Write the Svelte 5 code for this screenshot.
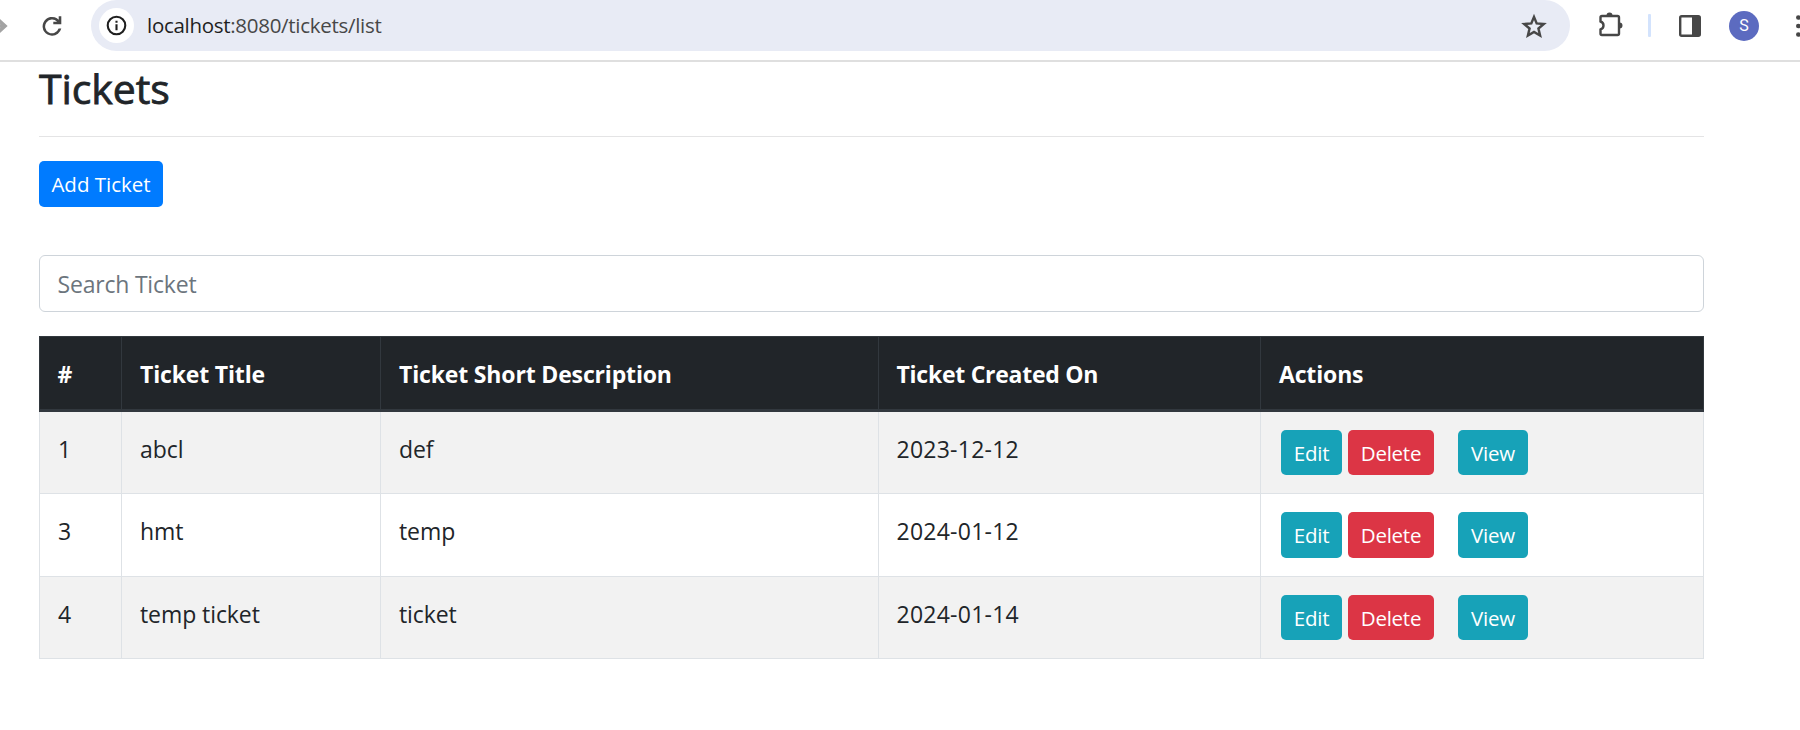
<script>
  const columns = ['#', 'Ticket Title', 'Ticket Short Description', 'Ticket Created On', 'Actions'];
  const tickets = [
    { id: 1, title: 'abcl', description: 'def', created: '2023-12-12' },
    { id: 3, title: 'hmt', description: 'temp', created: '2024-01-12' },
    { id: 4, title: 'temp ticket', description: 'ticket', created: '2024-01-14' }
  ];
</script>

<div class="window">
  <header class="toolbar">
    <svg class="forward" viewBox="0 0 8 24"><path d="M-8 12H5M-2 5.500L5 12L-2 18.500" fill="none" stroke="#a3a3a3" stroke-width="3.600" /></svg>
    <svg class="reload" viewBox="0 0 24 24"><path fill="#474747" d="M12 21.7a9.4 9.4 0 1 1 6.7-16V2.3h2.6v8h-8V7.700h3.800a6.900 6.900 0 1 0 1.500 6.900h2.700A9.400 9.400 0 0 1 12 21.700z" /></svg>
    <div class="address">
      <span class="info">
        <svg viewBox="0 0 22 22"><circle cx="11" cy="11" r="9.200" fill="none" stroke="#1f1f1f" stroke-width="2.200" /><path d="M11 9.800V16M11 6V8.200" stroke="#1f1f1f" stroke-width="2.200" /></svg>
      </span>
      <span class="url"><b>localhost</b>:8080/tickets/list</span>
      <svg class="star" viewBox="0 0 24 24"><path d="M12 4.200L14.300 9.800L20.400 10.300L15.800 14.200L17.200 20.100L12 17L6.800 20.100L8.200 14.200L3.600 10.300L9.700 9.800Z" fill="none" stroke="#474747" stroke-width="2.100" /></svg>
    </div>
    <svg class="puzzle" viewBox="0 0 26 26"><path d="M4 4H19.500Q21 4 21 5.500V21.500Q21 23 19.500 23H4Q2.500 23 2.500 21.500V17.500Q5.500 16.500 5.500 13.500Q5.500 10.500 2.500 9.500V5.500Q2.500 4 4 4Z" fill="none" stroke="#474747" stroke-width="2.400" /><path d="M8.500 3.500A3 3 0 0 1 14.500 3.500ZM21.500 10.500A3 3 0 0 1 21.500 16.500Z" fill="#474747" /></svg>
    <i class="divider"></i>
    <svg class="panel" viewBox="0 0 22 22"><rect x="1.200" y="1.200" width="19.600" height="19.600" rx="1.500" fill="none" stroke="#474747" stroke-width="2.400" /><path d="M13 1H21V21H13Z" fill="#474747" /></svg>
    <span class="avatar">S</span>
    <svg class="more" viewBox="0 0 4 24"><g fill="#474747"><circle cx="2.300" cy="3.500" r="2.300" /><circle cx="2.300" cy="12" r="2.300" /><circle cx="2.300" cy="20.500" r="2.300" /></g></svg>
  </header>

  <main>
    <h2>Tickets</h2>
    <hr />
    <button class="btn add">Add Ticket</button>
    <input type="text" placeholder="Search Ticket" />
    <div class="table">
      <div class="row head">
        {#each columns as name, i}
          <div class="cell h{i}">{name}</div>
        {/each}
      </div>
      {#each tickets as t}
        <div class="row">
          <div class="cell">{t.id}</div>
          <div class="cell">{t.title}</div>
          <div class="cell">{t.description}</div>
          <div class="cell date">{t.created}</div>
          <div class="cell actions">
            <button class="btn edit">Edit</button>
            <button class="btn delete">Delete</button>
            <button class="btn view">View</button>
          </div>
        </div>
      {/each}
    </div>
  </main>
</div>

<style>
  :global(body) { margin: 0; background: #fff; overflow: hidden; }
  .window { width: 1800px; height: 730px; overflow: hidden; font-family: "Open Sans", sans-serif; color: #212529; }
  .window * { box-sizing: border-box; }
  svg { display: block; flex: none; }
  .toolbar { display: flex; align-items: center; height: 62px; padding-bottom: 9px; border-bottom: 2px solid #dfdfdf; }
  .forward { width: 8px; height: 24px; margin-right: 32px; }
  .reload { width: 24px; height: 24px; margin-right: 27px; }
  .address { display: flex; align-items: center; width: 1479px; height: 51px; flex: none; padding: 0 22px 0 8px; border-radius: 26px; background: #e8ebf5; }
  .info { display: flex; align-items: center; justify-content: center; width: 35px; height: 35px; border-radius: 50%; background: #fff; }
  .info svg { width: 21px; height: 21px; }
  .url { margin: -2px 0 0 13px; font-size: 20.5px; color: #474747; letter-spacing: -0.29px; }
  .url b { font-weight: 400; color: #1f1f1f; }
  .star { width: 28px; height: 28px; margin-left: auto; }
  .puzzle { width: 26px; height: 26px; margin: -1px 0 0 28px; }
  .divider { width: 3px; height: 23px; margin-left: 24px; border-radius: 1px; background: #d3e3fd; }
  .panel { width: 22px; height: 22px; margin-left: 28px; }
  .avatar { width: 30px; height: 30px; flex: none; margin-left: 28px; border-radius: 50%; background: #5c6bc0; color: #fff; font: 16px/30px Roboto, sans-serif; text-align: center; }
  .more { width: 4px; height: 24px; margin-left: 37px; }
  main { width: 1665px; margin-left: 39px; }
  h2 { margin: 0; height: 74px; padding-top: 1px; font-size: 41px; line-height: 50px; font-weight: 400; letter-spacing: -0.1px; -webkit-text-stroke: 0.8px #212529; }
  hr { margin: 0; border: 0; height: 1px; background: #e4e4e5; }
  .btn { display: block; height: 46px; padding: 0; border: 0; border-radius: 5px; color: #fff; font: 20.5px/44px "Open Sans", sans-serif; text-align: center; white-space: nowrap; }
  .add { width: 124px; margin-top: 24px; background: #007bff; }
  input { display: block; width: 100%; height: 57px; margin: 48px 0 24px; padding: 0 18px 0 17.5px; border: 1px solid #ced4da; border-radius: 6px; font: 23px "Open Sans", sans-serif; letter-spacing: -0.2px; outline: 0; }
  input::placeholder { color: #6c757d; opacity: 1; }
  .table { border-left: 1px solid #dee2e6; }
  .row { display: grid; grid-template-columns: 82px 259px 498px 382px 443px; height: 82px; border-bottom: 1px solid #dee2e6; background: #fff; }
  .row:nth-child(even) { background: #f2f2f2; }
  .row:nth-child(3) { height: 83px; }
  .cell { padding: 19px 18px 0; border-right: 1px solid #dee2e6; font-size: 23px; line-height: 36px; letter-spacing: -0.08px; white-space: nowrap; }
  .cell.date { padding-left: 17.5px; letter-spacing: 0.25px; }
  .row.head { height: 76px; margin-left: -1px; grid-template-columns: 83px 259px 498px 382px 443px; background: #212529; border: solid #32383e; border-width: 1px 0 3px; color: #fff; }
  .head .cell { border-color: #32383e; font-weight: 700; letter-spacing: -0.16px; }
  .head .h0 { padding-left: 17.5px; border-left: 1px solid #32383e; }
  .head .h3 { padding-left: 17.5px; letter-spacing: -0.26px; }
  .cell.actions { display: flex; padding: 18px 0 0 20px; }
  .actions .btn { height: 45px; letter-spacing: -0.25px; }
  .row:nth-child(3) .btn { height: 46px; }
  .edit { width: 61px; margin-right: 6px; background: #17a2b8; }
  .delete { width: 86px; margin-right: 24px; background: #dc3545; }
  .view { width: 70px; background: #17a2b8; }
</style>
